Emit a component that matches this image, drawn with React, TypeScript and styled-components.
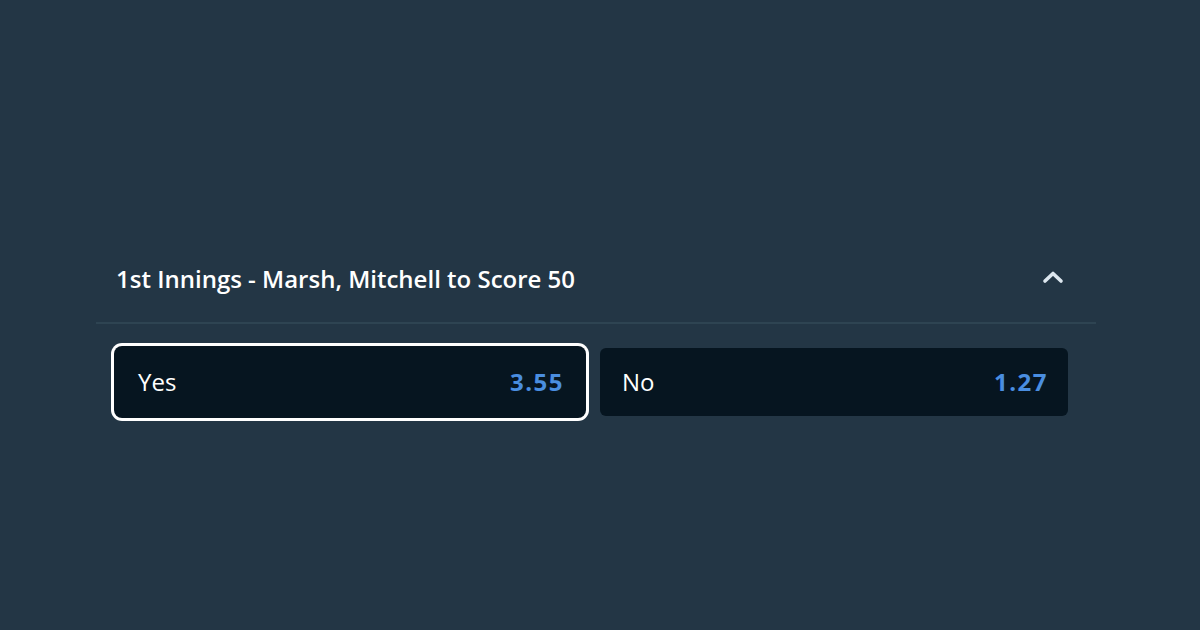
import React from "react";
import styled, { createGlobalStyle } from "styled-components";

const Global = createGlobalStyle`
  html, body { margin: 0; padding: 0; background: #233645; }
  body { font-family: "Open Sans", Lato, sans-serif; }
`;

const Page = styled.div`
  width: 1200px;
  height: 630px;
  background: #233645;
  display: flex;
  justify-content: flex-start;
  padding: 256px 0 0 96px;
  box-sizing: border-box;
`;

const Market = styled.section`
  width: 1000px;
  display: flex;
  flex-direction: column;
`;

const Header = styled.div`
  display: flex;
  align-items: center;
  justify-content: space-between;
  padding: 0 32px 22px 20px;
  height: 44px;
  border-bottom: 2px solid #2e4452;
`;

const Title = styled.h2`
  margin: 0;
  color: #ffffff;
  font-size: 24px;
  font-weight: 600;
  letter-spacing: 0;
`;

const Chevron = styled.svg`
  width: 22px;
  height: 16px;
  display: block;
  margin-top: -2px;
`;

const Options = styled.div`
  display: grid;
  grid-template-columns: 468px 468px;
  gap: 16px;
  padding: 24px 20px 0;
`;

const Option = styled.button<{ $selected?: boolean }>`
  height: 68px;
  border: none;
  border-radius: 6px;
  background: #061520;
  display: flex;
  align-items: center;
  justify-content: space-between;
  padding: 0 20px 2px 22px;
  font-family: inherit;
  cursor: pointer;
  box-shadow: ${(p) => (p.$selected ? "0 0 0 2px #061520, 0 0 0 5px #ffffff" : "none")};
`;

const Label = styled.span`
  color: #ffffff;
  font-size: 24px;
  font-weight: 500;
`;

const Price = styled.span`
  color: #4a8ee0;
  font-size: 24px;
  font-weight: 700;
  letter-spacing: 1.5px;
`;

export default function App() {
  return (
    <>
      <Global />
      <Page>
        <Market>
          <Header>
            <Title>1st Innings - Marsh, Mitchell to Score 50</Title>
            <Chevron viewBox="0 0 22 16" aria-hidden>
              <path d="M3 12 L11 4.5 L19 12" fill="none" stroke="#dde7ef" strokeWidth="3.6" strokeLinecap="round" strokeLinejoin="round" />
            </Chevron>
          </Header>
          <Options>
            <Option $selected>
              <Label>Yes</Label>
              <Price>3.55</Price>
            </Option>
            <Option>
              <Label>No</Label>
              <Price>1.27</Price>
            </Option>
          </Options>
        </Market>
      </Page>
    </>
  );
}
